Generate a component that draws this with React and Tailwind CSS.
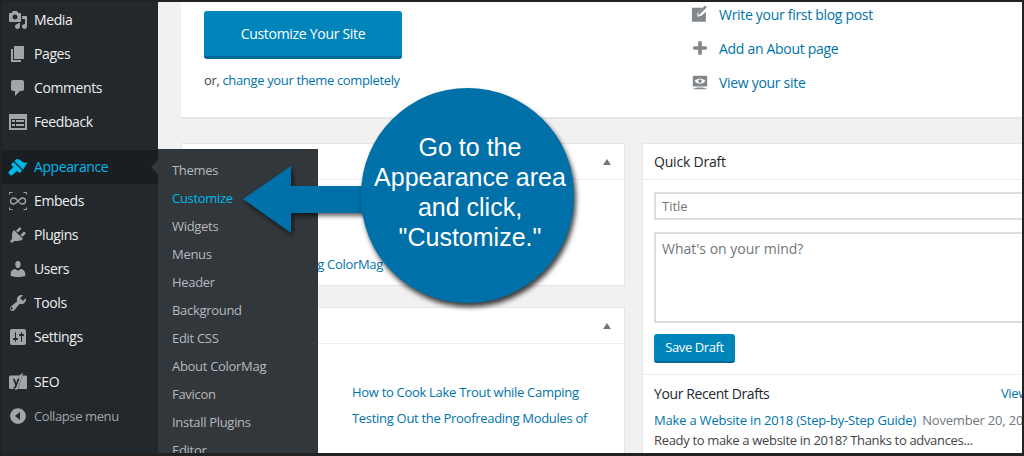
import React from "react";

const icons = {
  media: "M13 11V4c0-.55-.45-1-1-1h-1.670L9 1H5L3.670 3H2c-.55 0-1 .45-1 1v7c0 .55.45 1 1 1h10c.55 0 1-.45 1-1zM7 4.500c1.380 0 2.500 1.120 2.500 2.500S8.380 9.500 7 9.500 4.500 8.380 4.500 7 5.620 4.500 7 4.500zM14 6h5v10.500c0 1.380-1.120 2.500-2.500 2.500S14 17.880 14 16.500s1.120-2.500 2.500-2.500c.17 0 .34.020.5.050V9h-3V6zm-4 8.050V13h2v3.500c0 1.380-1.120 2.500-2.500 2.500S7 17.880 7 16.500 8.120 14 9.500 14c.17 0 .34.020.5.050z",
  pages: "M6 15V2h10v13H6zm-1 1h8v2H3V5h2v11z",
  comments: "M5 2h9c1.100 0 2 .9 2 2v7c0 1.100-.9 2-2 2h-2l-5 5v-5H5c-1.100 0-2-.9-2-2V4c0-1.100.9-2 2-2z",
  feedback: "M1 2h18v16H1V2zm2 5v9h14V7H3zm1 1h3v2H4V8zm4 0h8v2H8V8zm-4 4h3v2H4v-2zm4 0h8v2H8v-2z",
  appearance: "M19.500 5.200c-2.100.9-3.500.5-4.900-.3-1.500-.8-2.100-1.500-3.300-2.300-1.200-.8-2.700-.9-3.500-.1L6.400 4l8.700 8.700zM5.500 4.900L3.600 6.800c-.4.4-.4 1 0 1.400l1.200 1.200c.4.4.4 1 0 1.400-1.700 1.700-4.300 3.500-4.300 4.900 0 .3.100.5.300.7l1.800 1.800c.2.2.4.3.7.3 1.400 0 3.200-2.600 4.900-4.300.4-.4 1-.4 1.400 0l1.200 1.200c.4.4 1 .4 1.400 0l1.900-1.900z",
  plugins: "M13.110 4.360L9.870 7.600 8 5.730l3.240-3.240c.35-.34 1.050-.2 1.560.32.520.51.660 1.210.310 1.550zm-8 1.770l.91-1.120 9.010 9.010-1.190.84c-.71.710-2.630 1.160-3.820 1.160H6.140L4.900 17.260c-.59.590-1.540.59-2.120 0-.59-.58-.59-1.530 0-2.120l1.240-1.240v-3.880c0-1.130.4-3.050 1.090-3.890zm7.260 3.970l3.240-3.240c.340-.35 1.040-.21 1.550.31.520.51.660 1.210.310 1.550l-3.240 3.250z",
  users: "M10 9.250c-2.270 0-2.730-3.440-2.730-3.440C7 4.020 7.820 2 9.970 2c2.160 0 2.980 2.020 2.710 3.810 0 0-.41 3.440-2.680 3.440zm0 2.570L12.720 10c2.390 0 4.520 2.330 4.520 4.530v2.490s-3.650 1.130-7.240 1.130c-3.650 0-7.240-1.130-7.240-1.130v-2.490c0-2.250 1.940-4.480 4.470-4.480z",
  tools: "M16.680 9.770c-1.340 1.340-3.300 1.670-4.950.99l-5.410 6.520c-.99.990-2.590.99-3.570 0-.99-.98-.99-2.580 0-3.570l6.520-5.420c-.68-1.650-.35-3.610.99-4.950 1.280-1.280 3.120-1.620 4.720-1.060l-2.890 2.890 2.820 2.820 2.860-2.870c.53 1.590.18 3.370-1.090 4.650zM4.450 16.160c.43-.43.430-1.120 0-1.550-.43-.43-1.120-.43-1.550 0-.43.43-.43 1.120 0 1.550.43.430 1.120.430 1.550 0z",
  settings: "M18 16V4c0-1.100-.9-2-2-2H4c-1.100 0-2 .9-2 2v12c0 1.100.9 2 2 2h12c1.100 0 2-.9 2-2zM8 11h1c.55 0 1 .45 1 1s-.45 1-1 1H8v1.500c0 .280-.22.500-.5.500s-.5-.22-.5-.5V13H6c-.55 0-1-.45-1-1s.45-1 1-1h1V5.500c0-.28.22-.5.5-.5s.5.220.5.500V11zm5-2h-1c-.55 0-1-.45-1-1s.45-1 1-1h1V5.500c0-.28.22-.5.5-.5s.5.220.5.500V7h1c.55 0 1 .45 1 1s-.45 1-1 1h-1v5.500c0 .280-.22.500-.5.500s-.5-.22-.5-.5V9z",
  collapse: "M10 2.160c4.330 0 7.840 3.510 7.840 7.840s-3.510 7.840-7.840 7.840S2.160 14.330 2.160 10 5.670 2.160 10 2.160zM12 14V6l-5 4z",
  write: "M1 3h12.500l-5 5-1.400 5.200L12.500 11.500l4-4V18.500H1V3zm14.600-2.500l2 2-8.300 8.300-2.800.8.800-2.800 8.300-8.300z",
  plus: "M8 2.500h4V8h5.500v4H12v5.500H8V12H2.500V8H8V2.500z",
  view: "M18 14V4c0-.55-.45-1-1-1H3c-.55 0-1 .45-1 1v10c0 .55.45 1 1 1h14c.55 0 1-.45 1-1zm-8-8c2.300 0 4.400 1.140 6 3-1.600 1.860-3.700 3-6 3s-4.400-1.140-6-3c1.600-1.860 3.700-3 6-3zm2 3c0-1.100-.9-2-2-2s-2 .9-2 2 .9 2 2 2 2-.9 2-2zm2 8h3v1H3v-1h3v-1h8v1z",
};

function Icon({ name, className }) {
  return (
    <svg viewBox="0 0 20 20" className={className} fill="currentColor" fillRule="evenodd">
      <path d={icons[name]} />
    </svg>
  );
}

function EmbedIcon() {
  return (
    <svg viewBox="0 0 20 20" className="w-5 h-5 text-[#a0a5aa]" fill="none" stroke="currentColor">
      <path strokeWidth="1.300" d="M10 10c-1.500-2.200-2.800-3-4.400-3C3.800 7 2.500 8.300 2.500 10s1.300 3 3.100 3c3 0 5.800-6 8.800-6 1.800 0 3.100 1.300 3.100 3s-1.300 3-3.100 3c-1.600 0-2.900-.8-4.400-3z" />
      <path strokeWidth="1" d="M1.500 3.500V1.500h3M15.500 1.500h3v2M18.500 16.500v2h-3M4.500 18.500h-3v-2" />
    </svg>
  );
}

function SeoIcon() {
  return (
    <svg viewBox="0 0 20 20" className="w-5 h-5 text-[#a0a5aa]">
      <path fill="currentColor" d="M2.500 3.500h9L6.500 17H2.500C1.700 17 1 16.300 1 15.500v-10.500C1 4.200 1.700 3.500 2.500 3.500zM14.500 3.500h3c.8 0 1.500.7 1.500 1.500v12H10z" />
      <path fill="currentColor" d="M11.500 3.500L14.800 .5 14.500 3.500 9.500 17.500H6.500z" />
      <path fill="#23282d" d="M4.800 6.800h1.900l1.500 4.200 1.500-4.200h1.900L8.300 15c-.5 1.200-1.300 1.700-2.800 1.700v-1.500c.9 0 1.300-.3 1.600-1.100L7.300 13.500z" />
    </svg>
  );
}

const topItems = [
  ["media", "Media"],
  ["pages", "Pages"],
  ["comments", "Comments"],
  ["feedback", "Feedback"],
];

const midItems = [
  ["plugins", "Plugins"],
  ["users", "Users"],
  ["tools", "Tools"],
  ["settings", "Settings"],
];

const subItems = ["Themes", "Customize", "Widgets", "Menus", "Header", "Background", "Edit CSS", "About ColorMag", "Favicon", "Install Plugins", "Editor"];

function MenuRow({ icon, label, active }) {
  return (
    <div className={`h-[34px] flex items-center pl-[6px] gap-[6px] tracking-[-0.4px] ${active ? "bg-[#191e23] text-[#00b9eb]" : "text-[#eeeeee]"}`}>
      <span className={active ? "text-[#00b9eb]" : "text-[#a0a5aa]"}>{icon}</span>
      <span className="pb-[2px]">{label}</span>
    </div>
  );
}

function Panel({ title, toggle, className, children }) {
  return (
    <div className={`bg-white border border-[#e5e5e5] ${className}`}>
      <div className="h-[36px] border-b border-[#eeeeee] flex items-center justify-between pl-[11px] pr-[13px]">
        <span className="text-[#23282d] text-[14px] font-medium tracking-[-0.2px]">{title}</span>
        {toggle && <span className="w-0 h-0 border-x-[4px] border-x-transparent border-b-[6px] border-b-[#72777c]" />}
      </div>
      {children}
    </div>
  );
}

export default function App() {
  return (
    <div className="relative w-[1024px] h-[456px] overflow-hidden border-2 border-b-[3px] border-[#222222] flex text-[14px] bg-[#f1f1f1] font-['Open_Sans',sans-serif]">
      <aside className="w-[156px] shrink-0 bg-[#23282d] pt-px">
        {topItems.map(([name, label]) => (
          <MenuRow key={name} label={label} icon={<Icon name={name} className="w-5 h-5" />} />
        ))}
        <div className="mt-[11px]">
          <MenuRow active label="Appearance" icon={<Icon name="appearance" className="w-5 h-5" />} />
          <MenuRow label="Embeds" icon={<EmbedIcon />} />
          {midItems.map(([name, label]) => (
            <MenuRow key={name} label={label} icon={<Icon name={name} className="w-5 h-5" />} />
          ))}
        </div>
        <div className="mt-[11px]">
          <MenuRow label="SEO" icon={<SeoIcon />} />
          <div className="h-[34px] flex items-center pl-[6px] gap-[6px] text-[#a0a5aa] text-[13px] tracking-[-0.4px]">
            <Icon name="collapse" className="w-5 h-5" />
            <span className="pt-[2px]">Collapse menu</span>
          </div>
        </div>
      </aside>

      <main className="flex-1 min-w-0 pl-[23px] overflow-hidden">
        <section className="h-[116px] w-[841px] bg-white border-b border-[#e5e5e5] flex shadow-[0_1px_1px_rgba(0,0,0,0.04)]">
          <div className="w-[510px] shrink-0 pl-[23px] pt-[9px]">
            <div className="w-[198px] h-[48px] rounded-[3px] bg-[#0085ba] border-b-[3px] border-[#006799] flex items-center justify-center text-white tracking-[-0.3px]">
              Customize Your Site
            </div>
            <p className="mt-[12px] text-[13px] text-[#444444] tracking-[-0.35px]">
              or, <span className="text-[#0073aa]">change your theme completely</span>
            </p>
          </div>
          <div className="text-[#0073aa] flex flex-col tracking-[-0.3px] -mt-[5px]">
            {[["write", "Write your first blog post"], ["plus", "Add an About page"], ["view", "View your site"]].map(([name, label]) => (
              <div key={name} className="h-[34px] flex items-center gap-[10px]">
                <Icon name={name} className="w-[18px] h-[18px] text-[#82878c]" />
                <span>{label}</span>
              </div>
            ))}
          </div>
        </section>

        <div className="mt-[25px] flex gap-[17px] w-[900px]">
          <div className="w-[444px] shrink-0 flex flex-col gap-[21px]">
            <Panel title="At a Glance" toggle className="h-[143px]">
              <p className="mt-[75px] w-[201px] text-right whitespace-nowrap text-[13px] text-[#0073aa] tracking-[-0.3px]">Running ColorMag</p>
            </Panel>
            <Panel title="Activity" toggle className="h-[160px]">
              <div className="pl-[170px] pt-[39px] text-[13px] text-[#0073aa] flex flex-col gap-[6px] tracking-[-0.3px]">
                <p>How to Cook Lake Trout while Camping</p>
                <p>Testing Out the Proofreading Modules of</p>
              </div>
            </Panel>
          </div>

          <Panel title="Quick Draft" className="w-[420px] shrink-0 h-[320px]">
            <div className="px-[11px] pt-[12px]">
              <div className="h-[28px] border-2 border-[#dddddd] flex items-center pl-[6px] pt-[2px] text-[#72777c] text-[13px]">Title</div>
              <div className="mt-[12px] h-[91px] border-2 border-[#dddddd] pl-[6px] pt-[4px] text-[#72777c] text-[14px]">What's on your mind?</div>
              <div className="mt-[11px] w-[81px] h-[29px] rounded-[3px] bg-[#0085ba] border-b-2 border-[#006799] flex items-center justify-center pt-px text-white text-[13px] tracking-[-0.4px]">
                Save Draft
              </div>
            </div>
            <div className="mt-[11px] border-t border-[#eeeeee] pl-[11px] pt-[8px] text-[13px]">
              <div className="flex text-[#23282d] text-[14px] tracking-[-0.4px]">
                <span className="w-[347px]">Your Recent Drafts</span>
                <span className="text-[#0073aa] text-[13px] pt-px">View all</span>
              </div>
              <p className="mt-[7px] whitespace-nowrap text-[#72777c] tracking-[-0.2px]">
                <span className="text-[#0073aa] mr-[3px]">Make a Website in 2018 (Step-by-Step Guide)</span> November 20, 2017
              </p>
              <p className="whitespace-nowrap text-[#444444] tracking-[-0.33px]">Ready to make a website in 2018? Thanks to advances...</p>
            </div>
          </Panel>
        </div>
      </main>

      {/* fly-out submenu */}
      <div className="absolute left-[156px] top-[147px] w-[160px] h-[320px] bg-[#32373c] pt-[8px] text-[13px] tracking-[-0.3px]">
        <span className="absolute -left-[7px] top-[11px] w-0 h-0 border-y-[7px] border-y-transparent border-r-[7px] border-r-[#32373c]" />
        {subItems.map((item) => (
          <div key={item} className={`h-[28px] flex items-center pl-[14px] ${item === "Customize" ? "text-[#00b9eb]" : "text-[#b4b9be]"}`}>
            {item}
          </div>
        ))}
      </div>

      {/* callout arrow */}
      <svg className="absolute left-[236px] top-[158px] w-[140px] h-[86px]" viewBox="0 0 140 86" style={{ filter: "drop-shadow(2px 3px 2px rgba(0,0,0,0.6))" }}>
        <path fill="#0070a8" d="M5 39L53 6V26H140V53H53V73z" />
      </svg>

      {/* callout bubble */}
      <div className="absolute left-[359px] top-[86px] w-[213px] h-[215px] rounded-full bg-[#0070a8] shadow-[2px_4px_5px_rgba(0,0,0,0.75)] flex flex-col items-center justify-center text-white text-center text-[25px] leading-[30px] font-['Liberation_Sans',sans-serif] pb-[7px] pl-[5px]">
        <div>Go to the</div>
        <div>Appearance area</div>
        <div>and click,</div>
        <div>"Customize."</div>
      </div>
    </div>
  );
}
